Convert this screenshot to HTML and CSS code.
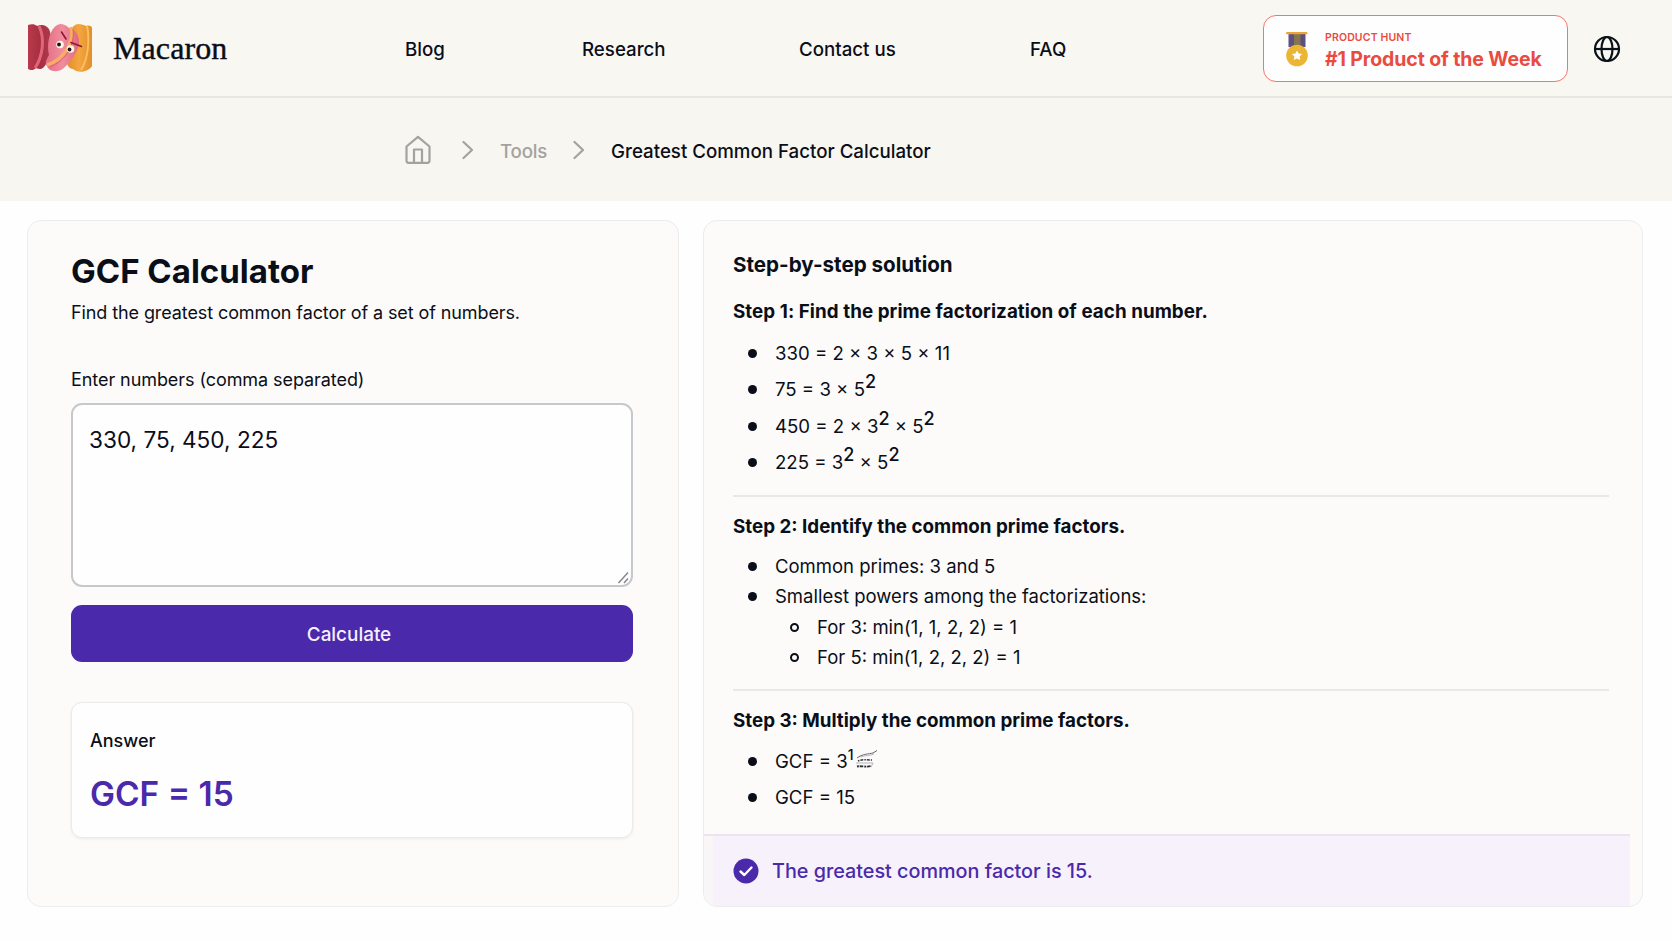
FILE: index.html
```html
<!DOCTYPE html>
<html lang="en">
<head>
    <meta charset="UTF-8">
    <meta name="viewport" content="width=device-width, initial-scale=1.0">
    <title>Greatest Common Factor Calculator - Macaron</title>
    <link rel="stylesheet" href="styles.css">
</head>
<body>

<header class="site-header">
    <a class="brand" href="#">
        <svg class="logo" width="64" height="48" viewBox="0 0 64 48">
            <defs>
                <linearGradient id="red" x1="0" x2="1">
                    <stop offset="0" stop-color="#b93a4c"/>
                    <stop offset=".5" stop-color="#a5303f"/>
                    <stop offset="1" stop-color="#b03a4b"/>
                </linearGradient>
                <linearGradient id="pink" x1="0" x2="1">
                    <stop offset="0" stop-color="#e56f86"/>
                    <stop offset=".5" stop-color="#f08d9d"/>
                    <stop offset="1" stop-color="#e06a7c"/>
                </linearGradient>
                <linearGradient id="orange" x1="0" x2="1">
                    <stop offset="0" stop-color="#e58a2c"/>
                    <stop offset=".5" stop-color="#f2a640"/>
                    <stop offset="1" stop-color="#e28f28"/>
                </linearGradient>
            </defs>
            <path d="M50 0c4 0 6 1 8 2 3-1 6 0 6 2v38c-2 3-4 4-7 5-5 2-10 0-12-2-5 0-8-7-6-16C38 15 42 1 50 0z" fill="url(#orange)"/>
            <path d="M59 2c3 14 1 33-6 44" fill="none" stroke="#f9bd62" stroke-width="2"/>
            <path d="M0 1c3-1 7-1 9 1 5-2 9-1 12 3 5 11 2 30-5 38-3 3-5 2-8 1-3 3-6 2-8 1z" fill="url(#red)"/>
            <path d="M11 2c6 12 4 30-4 42" fill="none" stroke="#e3637a" stroke-width="3"/>
            <path d="M32 0c4 0 7 2 9 4 9 2 12 12 9 20-4 9-9 15-14 20-6 5-15 4-17-2-3-3 0-7 2-11C18 20 22 2 32 0z" fill="url(#pink)"/>
            <path d="M43 3c3 15-6 32-24 38" fill="none" stroke="#f8ae62" stroke-width="3.200"/>
            <path d="M45 5c2 15-6 31-23 38" fill="none" stroke="#d25670" stroke-width=".8"/>
            <circle cx="32" cy="20.500" r="3.800" fill="#fff6e8"/>
            <circle cx="42.500" cy="25" r="3.800" fill="#fff6e8"/>
            <circle cx="31" cy="20.500" r="1.900" fill="#17161c"/>
            <circle cx="41.500" cy="25.500" r="1.900" fill="#17161c"/>
            <path d="M33.500 8l4.500 7M43 18.500l10.500 4" fill="none" stroke="#8c1930" stroke-width="1.600" stroke-linecap="round"/>
        </svg>
        <span class="brand-name">Macaron</span>
    </a>

    <nav class="main-nav">
        <a class="nav-blog" href="#">Blog</a>
        <a class="nav-research" href="#">Research</a>
        <a class="nav-contact" href="#">Contact us</a>
        <a class="nav-faq" href="#">FAQ</a>
    </nav>

    <a class="award" href="#">
        <svg class="medal" width="22" height="35" viewBox="0 0 22 35">
            <path d="M2.500 1h17v14h-17z" fill="#5c4f83"/>
            <path d="M8 1h6.500v14H8z" fill="#84754c"/>
            <rect x="0" y="0" width="21.500" height="2.200" rx="1" fill="#e9a53a"/>
            <circle cx="11" cy="23.500" r="10.800" fill="#ebb535"/>
            <path d="M11 18.400l1.600 3.200 3.500.5-2.500 2.500.6 3.500-3.200-1.700-3.200 1.700.6-3.500-2.500-2.500 3.500-.5z" fill="#fff"/>
        </svg>
        <span class="award-text">
            <span class="award-site">PRODUCT HUNT</span>
            <span class="award-title">#1 Product of the Week</span>
        </span>
    </a>

    <a class="language" href="#">
        <svg width="28" height="28" viewBox="0 0 28 28" fill="none" stroke="#0b1118" stroke-width="2.200">
            <circle cx="14" cy="14" r="12"/>
            <ellipse cx="14" cy="14" rx="5.500" ry="12"/>
            <path d="M2 14h24"/>
        </svg>
    </a>
</header>

<div class="breadcrumb">
    <svg class="home" width="26" height="30" viewBox="0 0 26 30" fill="none" stroke="#a3a2a0" stroke-width="2.200" stroke-linejoin="round">
        <path d="M1.500 11.500L13 1.800l11.500 9.700v14.300a2 2 0 0 1-2 2h-19a2 2 0 0 1-2-2z"/>
        <path d="M9 27.500v-13h8v13"/>
    </svg>
    <svg class="chevron" width="12" height="20" viewBox="0 0 12 20"><path d="M1.500 2l8.500 8-8.500 8"/></svg>
    <a class="crumb" href="#">Tools</a>
    <svg class="chevron chevron-last" width="12" height="20" viewBox="0 0 12 20"><path d="M1.500 2l8.500 8-8.500 8"/></svg>
    <span class="current">Greatest Common Factor Calculator</span>
</div>

<main class="container">
    <section class="panel calculator">
        <h1>GCF Calculator</h1>
        <p class="intro">Find the greatest common factor of a set of numbers.</p>
        <label for="numbers">Enter numbers (comma separated)</label>
        <div class="input-wrap">
            <textarea id="numbers" spellcheck="false">330, 75, 450, 225</textarea>
            <svg class="grip" width="14" height="14" viewBox="0 0 14 14"><path d="M1.500 12L11 1.500M7 12l4-4.500"/></svg>
        </div>
        <button class="calculate" type="button">Calculate</button>
        <div class="answer">
            <h2>Answer</h2>
            <p class="answer-value">GCF = 15</p>
        </div>
    </section>

    <section class="panel solution">
        <div class="steps">
            <h2>Step-by-step solution</h2>

            <h3>Step 1: Find the prime factorization of each number.</h3>
            <ul class="step-one">
                <li>330 = 2 × 3 × 5 × 11</li>
                <li>75 = 3 × 5<sup>2</sup></li>
                <li>450 = 2 × 3<sup>2</sup> × 5<sup>2</sup></li>
                <li>225 = 3<sup>2</sup> × 5<sup>2</sup></li>
            </ul>
            <hr>

            <h3 class="title-two">Step 2: Identify the common prime factors.</h3>
            <ul class="step-two">
                <li>Common primes: 3 and 5</li>
                <li>Smallest powers among the factorizations:
                    <ul>
                        <li>For 3: min(1, 1, 2, 2) = 1</li>
                        <li>For 5: min(1, 2, 2, 2) = 1</li>
                    </ul>
                </li>
            </ul>
            <hr>

            <h3 class="title-three">Step 3: Multiply the common prime factors.</h3>
            <ul class="step-three">
                <li>GCF = 3<sup>1</sup><svg class="scribble" width="24" height="20" viewBox="0 0 24 20" fill="none">
                    <path d="M2 8c5-4 12-4 16-5l4-2.500" stroke="#63666c" stroke-width="1"/>
                    <path d="M5 7c6-2 10-1 14-3" stroke="#a6a8ac" stroke-width=".8"/>
                    <path d="M3 11c4-2 9-1 14-1" stroke="#34373d" stroke-width="1.600" stroke-dasharray="1.500 1 3 1"/>
                    <path d="M1 13h17l-2 4" stroke="#b4b5b8" stroke-width="1"/>
                    <path d="M2 16.500c4-1 9 1 14-.5" stroke="#2c2f36" stroke-width="1.900" stroke-dasharray="2 .8 3.500 1"/>
                </svg></li>
                <li>GCF = 15</li>
            </ul>
        </div>

        <div class="result">
            <svg width="26" height="26" viewBox="0 0 26 26">
                <circle cx="13" cy="13" r="12.500" fill="#4b29ab"/>
                <path d="M7.500 13.500l3.800 3.500 7.200-7.500" fill="none" stroke="#fff" stroke-width="2.400" stroke-linecap="round" stroke-linejoin="round"/>
            </svg>
            <span>The greatest common factor is 15.</span>
        </div>
    </section>
</main>

</body>
</html>
```
FILE: styles.css
```css
* {
    box-sizing: border-box;
}
body {
    font-family: Inter, "Liberation Sans", sans-serif;
    background-color: #fefefe;
    color: #0a0e18;
    margin: 0;
    overflow: hidden;
}
a {
    color: inherit;
    text-decoration: none;
}
h1, h2, h3, p, ul {
    margin: 0;
    padding: 0;
}
svg {
    display: block;
    flex: none;
}

/* Header */
.site-header {
    display: flex;
    align-items: center;
    height: 98px;
    padding: 0 50px 0 28px;
    background-color: #f9f7f2;
    border-bottom: 2px solid #e9e7e3;
}
.brand {
    display: flex;
    align-items: center;
    width: 377px;
}
.brand-name {
    margin-left: 21px;
    font-family: "Liberation Serif", serif;
    font-size: 32px;
    line-height: 40px;
    letter-spacing: 0.1px;
    -webkit-text-stroke: 0.4px #0a0e18;
}
.main-nav {
    display: flex;
    width: 858px;
    padding-top: 2px;
    font-size: 18.7px;
    font-weight: 500;
}
.nav-blog {
    width: 177px;
}
.nav-research {
    width: 217px;
}
.nav-contact {
    width: 231px;
}
.award {
    display: flex;
    align-items: center;
    width: 305px;
    height: 67px;
    margin-top: 1px;
    padding-left: 22px;
    background-color: #fffefe;
    border: 1px solid #f3756d;
    border-radius: 13px;
    color: #ea4b3f;
}
.medal {
    margin-top: 2px;
}
.award-text {
    display: flex;
    flex-direction: column;
    margin-left: 17px;
    padding-top: 4px;
    font-weight: 600;
}
.award-site {
    font-size: 10.5px;
    line-height: 17px;
    letter-spacing: 0.15px;
}
.award-title {
    font-size: 19.5px;
    font-weight: 700;
    line-height: 27px;
    letter-spacing: -0.11px;
}
.language {
    margin-left: 25px;
    padding-top: 1px;
}

/* Breadcrumb */
.breadcrumb {
    display: flex;
    align-items: center;
    height: 103px;
    padding: 0 0 0 405px;
    background-color: #f8f6f1;
    font-size: 18.7px;
}
.chevron {
    margin: 1px 26px 0 31px;
    fill: none;
    stroke: #a3a2a0;
    stroke-width: 2.2;
    stroke-linecap: round;
    stroke-linejoin: round;
}
.chevron-last {
    margin-left: 26px;
}
.crumb {
    padding-top: 3px;
    color: #a3a2a0;
    font-weight: 500;
    letter-spacing: -0.2px;
}
.current {
    padding-top: 3px;
    font-weight: 500;
}

/* Panels */
.container {
    display: grid;
    grid-template-columns: 652px 940px;
    gap: 24px;
    padding: 19px 27px 0;
}
.panel {
    height: 687px;
    background-color: #fcfbf9;
    border: 1px solid #ececec;
    border-radius: 14px;
}
.calculator {
    padding: 32px 45px 0 43px;
}
h1 {
    font-size: 33px;
    font-weight: 700;
    line-height: 36px;
}
.intro {
    margin-top: 10px;
    font-size: 18px;
    line-height: 28px;
    letter-spacing: -0.1px;
}
label {
    display: block;
    margin-top: 39px;
    font-size: 18px;
    line-height: 28px;
    letter-spacing: -0.07px;
}
.input-wrap {
    position: relative;
    margin-top: 9px;
}
textarea {
    display: block;
    width: 100%;
    height: 184px;
    padding: 19px 16px;
    background-color: #fefefe;
    border: 2px solid #c6c8cc;
    border-radius: 11px;
    color: inherit;
    font-family: inherit;
    font-size: 22.6px;
    line-height: 32px;
    outline: none;
    resize: none;
}
.grip {
    position: absolute;
    right: 2px;
    bottom: 2px;
    fill: none;
    stroke: #85878c;
    stroke-width: 1.500;
}
.calculate {
    display: block;
    width: 100%;
    height: 57px;
    margin-top: 18px;
    padding: 1px 6px 0 0;
    background-color: #4b29ab;
    border: none;
    border-radius: 11px;
    color: #f4f0fc;
    font-family: inherit;
    font-size: 18.9px;
    font-weight: 500;
}
.answer {
    height: 136px;
    margin-top: 40px;
    padding: 24px 18px;
    background-color: #fefefe;
    border: 1px solid #ebebeb;
    border-radius: 11px;
    box-shadow: 0 1px 3px rgba(0, 0, 0, 0.07);
}
.answer h2 {
    font-size: 18px;
    font-weight: 500;
    line-height: 28px;
}
.answer-value {
    margin-top: 17px;
    color: #4b29ab;
    font-size: 33.4px;
    font-weight: 600;
    line-height: 44px;
}

/* Solution */
.solution {
    display: flex;
    flex-direction: column;
    justify-content: space-between;
}
.steps {
    padding: 30px 33px 0 29px;
}
.steps h2 {
    font-size: 20.6px;
    font-weight: 700;
    line-height: 28px;
}
.steps h3 {
    margin-top: 19px;
    font-size: 18.8px;
    font-weight: 700;
    line-height: 28px;
    letter-spacing: 0.06px;
}
.steps .title-two, .steps .title-three {
    margin-top: 16px;
    letter-spacing: 0;
}
.steps hr {
    height: 2px;
    margin: 14px 0 0;
    background-color: #e9e8e7;
    border: none;
}
.steps li {
    position: relative;
    padding-left: 42px;
    font-size: 18.6px;
    line-height: 36.6px;
    list-style: none;
}
/* round bullets */
.steps li::before {
    content: "";
    box-sizing: border-box;
    position: absolute;
    left: 15px;
    top: 14px;
    width: 9px;
    height: 9px;
    border-radius: 50%;
    background-color: #0a0e18;
}
.step-one {
    margin-top: 8.5px;
}
.step-two {
    margin-top: 10px;
}
.step-three {
    margin-top: 8px;
}
.steps .step-two li {
    font-size: 18.5px;
    line-height: 30.5px;
}
.steps .step-two li::before {
    top: 11px;
}
.steps .step-two li li::before {
    background-color: transparent;
    border: 2px solid #0a0e18;
}
.step-two + hr {
    margin-top: 16px;
}
.steps .step-three li {
    height: 36px;
    line-height: 36px;
}
.steps sup {
    position: relative;
    top: -8px;
    font-size: 18px;
    font-weight: 500;
    line-height: 0;
    vertical-align: baseline;
}
.steps .step-three sup {
    font-size: 14px;
}
.scribble {
    display: inline-block;
    margin-left: 1px;
    vertical-align: -2px;
}
.result {
    display: flex;
    align-items: center;
    gap: 13px;
    height: 72px;
    margin: 0 12px 0 0;
    padding-left: 29px;
    background: linear-gradient(to right, #f9f6f8 9px, #f6f1fa 9px);
    border-top: 2px solid #e9e5ee;
    border-bottom-left-radius: 13px;
    color: #4b29ab;
    font-size: 19.8px;
    font-weight: 500;
}
```
